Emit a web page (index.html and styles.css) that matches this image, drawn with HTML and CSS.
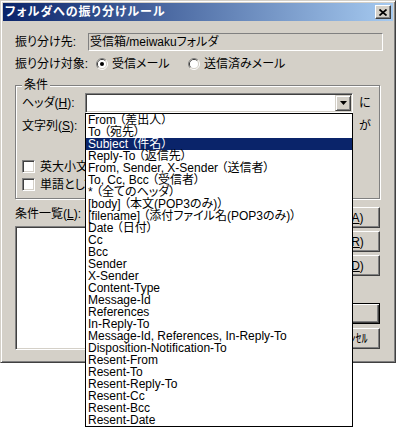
FILE: index.html
```html
<!DOCTYPE html>
<html lang="ja">
<head>
<meta charset="utf-8">
<title>フォルダへの振り分けルール</title>
<link rel="stylesheet" href="styles.css">
</head>
<body>
<div class="page">
<div class="dialog">
  <div class="titlebar">
    <span class="title">フォルダへの振り分けルール</span>
    <span class="close-btn">
      <svg width="8" height="7" viewBox="0 0 8 7"><path d="M0.5 0.5 L7.5 6.5 M7.5 0.5 L0.5 6.5" stroke="#000" stroke-width="1.7" fill="none"/></svg>
    </span>
  </div>
  <div class="content">
    <div class="row-dest">
      <span class="lbl-dest">振り分け先:</span>
      <div class="static">受信箱/meiwakuフォルダ</div>
    </div>
    <div class="row-target">
      <span class="lbl-target">振り分け対象:</span>
      <span class="radio radio-first">
        <svg class="rb" width="12" height="12" viewBox="0 0 12 12">
          <path d="M9.89 2.11 A5.5 5.5 0 0 0 2.11 9.89" stroke="#808080" fill="none"/>
          <path d="M2.11 9.89 A5.5 5.5 0 0 0 9.89 2.11" stroke="#fff" fill="none"/>
          <path d="M9.18 2.82 A4.5 4.5 0 0 0 2.82 9.18" stroke="#404040" fill="none"/>
          <path d="M2.82 9.18 A4.5 4.5 0 0 0 9.18 2.82" stroke="#d4d0c8" fill="none"/>
          <circle cx="6" cy="6" r="4" fill="#fff"/>
          <circle cx="6" cy="6" r="2" fill="#000"/>
        </svg>受信メール
      </span>
      <span class="radio">
        <svg class="rb" width="12" height="12" viewBox="0 0 12 12">
          <path d="M9.89 2.11 A5.5 5.5 0 0 0 2.11 9.89" stroke="#808080" fill="none"/>
          <path d="M2.11 9.89 A5.5 5.5 0 0 0 9.89 2.11" stroke="#fff" fill="none"/>
          <path d="M9.18 2.82 A4.5 4.5 0 0 0 2.82 9.18" stroke="#404040" fill="none"/>
          <path d="M2.82 9.18 A4.5 4.5 0 0 0 9.18 2.82" stroke="#d4d0c8" fill="none"/>
          <circle cx="6" cy="6" r="4" fill="#fff"/>
        </svg>送信済みメール
      </span>
    </div>
    <div class="group">
      <span class="legend">条件</span>
      <div class="grow">
        <span class="glbl">ヘッダ(<u>H</u>):</span>
        <div class="combo">
          <span class="dd-btn">
            <svg width="7" height="4" viewBox="0 0 7 4"><path d="M0 0 H7 L3.5 4 Z" fill="#000"/></svg>
          </span>
        </div>
        <span class="suffix">に</span>
      </div>
      <div class="grow grow-second">
        <span class="glbl">文字列(<u>S</u>):</span>
        <div class="edit"></div>
        <span class="suffix">が</span>
      </div>
      <div class="crow crow-first"><span class="cb"></span>英大小文字を区別する</div>
      <div class="crow crow-second"><span class="cb"></span>単語として検索する</div>
    </div>
    <div class="lower">
      <div class="lower-left">
        <div class="list-lbl">条件一覧(<u>L</u>):</div>
        <div class="listbox"></div>
      </div>
      <div class="lower-right">
        <span class="btn">追加(<u>A</u>)</span>
        <span class="btn btn-gap">置換(<u>R</u>)</span>
        <span class="btn btn-gap">削除(<u>D</u>)</span>
        <span class="btn btn-default">OK</span>
        <span class="btn btn-cancel">ｷｬﾝｾﾙ</span>
      </div>
    </div>
  </div>
  <ul class="dropdown">
    <li>From （差出人）</li>
    <li>To （宛先）</li>
    <li class="sel">Subject （件名）</li>
    <li>Reply-To （返信先）</li>
    <li>From, Sender, X-Sender （送信者）</li>
    <li>To, Cc, Bcc （受信者）</li>
    <li>* （全てのヘッダ）</li>
    <li>[body] （本文(POP3のみ)）</li>
    <li>[filename] （添付ファイル名(POP3のみ)）</li>
    <li>Date （日付）</li>
    <li>Cc</li>
    <li>Bcc</li>
    <li>Sender</li>
    <li>X-Sender</li>
    <li>Content-Type</li>
    <li>Message-Id</li>
    <li>References</li>
    <li>In-Reply-To</li>
    <li>Message-Id, References, In-Reply-To</li>
    <li>Disposition-Notification-To</li>
    <li>Resent-From</li>
    <li>Resent-To</li>
    <li>Resent-Reply-To</li>
    <li>Resent-Cc</li>
    <li>Resent-Bcc</li>
    <li>Resent-Date</li>
  </ul>
</div>
</div>
</body>
</html>
```
FILE: styles.css
```css
* { box-sizing: border-box; }
html, body { margin: 0; padding: 0; background: #fff; }
body {
  font-family: "Liberation Sans", "Noto Sans CJK JP", sans-serif;
  font-size: 12px;
  line-height: 14px;
  color: #000;
  font-feature-settings: "palt";
}
.page { width: 396px; height: 430px; }
u { text-decoration: underline; text-underline-offset: 1px; }

.dialog {
  position: relative;
  width: 396px;
  height: 363px;
  background: #d4d0c8;
  border: 1px solid;
  border-color: #d4d0c8 #404040 #404040 #d4d0c8;
  box-shadow: inset 1px 1px #fff, inset -1px -1px #808080;
  padding: 2px;
}

.titlebar {
  height: 18px;
  display: flex;
  align-items: center;
  justify-content: space-between;
  padding: 0 2px;
  background: linear-gradient(to right, #0a246a, #a6caf0);
}
.title { color: #fff; font-weight: bold; line-height: 14px; letter-spacing: 1px; }
.close-btn {
  width: 16px;
  height: 14px;
  display: flex;
  align-items: center;
  justify-content: center;
  background: #d4d0c8;
  border: 1px solid;
  border-color: #fff #404040 #404040 #fff;
  box-shadow: inset -1px -1px #808080;
}

.content { padding: 12px 10px 0 12px; }

.row-dest { display: flex; align-items: center; height: 18px; }
.lbl-dest { width: 73px; flex: none; }
.static {
  flex: 1;
  height: 18px;
  border: 1px solid;
  border-color: #808080 #fff #fff #808080;
  padding-left: 1px;
  line-height: 16px;
  white-space: nowrap;
}

.row-target { display: flex; align-items: center; height: 14px; margin-top: 6px; }
.lbl-target { width: 81px; flex: none; }
.radio { display: flex; align-items: center; white-space: nowrap; }
.radio-first { width: 92px; }
.rb { flex: none; margin-right: 4px; }

.group {
  position: relative;
  margin-top: 14px;
  margin-right: 3px;
  border: 1px solid #808080;
  box-shadow: inset 1px 1px #fff, 1px 1px #fff;
  padding: 7px 6px 7px 6px;
}
.legend {
  position: absolute;
  top: -7px;
  left: 6px;
  padding: 0 2px;
  background: #d4d0c8;
  line-height: 13px;
}
.grow { display: flex; align-items: center; height: 20px; }
.grow-second { margin-top: 3px; }
.glbl { width: 63px; flex: none; white-space: nowrap; }
.combo, .edit {
  width: 268px;
  height: 20px;
  flex: none;
  background: #fff;
  border: 1px solid;
  border-color: #808080 #fff #fff #808080;
  box-shadow: inset 1px 1px #404040, inset -1px -1px #d4d0c8;
  padding: 1px;
  display: flex;
  justify-content: flex-end;
}
.dd-btn {
  width: 16px;
  height: 16px;
  background: #d4d0c8;
  border: 1px solid;
  border-color: #d4d0c8 #404040 #404040 #d4d0c8;
  box-shadow: inset 1px 1px #fff, inset -1px -1px #808080;
  display: flex;
  align-items: center;
  justify-content: center;
}
.suffix { margin-left: 6px; }

.crow { display: flex; align-items: center; height: 13px; white-space: nowrap; }
.crow-first { margin-top: 24px; }
.crow-second { margin-top: 5px; }
.cb {
  width: 13px;
  height: 13px;
  flex: none;
  margin-right: 5px;
  background: #fff;
  border: 1px solid;
  border-color: #808080 #fff #fff #808080;
  box-shadow: inset 1px 1px #404040, inset -1px -1px #d4d0c8;
}

.lower { display: flex; margin-top: 8px; }
.lower-left { flex: 1; }
.list-lbl { height: 14px; }
.listbox {
  margin-top: 5px;
  height: 124px;
  background: #fff;
  border: 1px solid;
  border-color: #808080 #fff #fff #808080;
  box-shadow: inset 1px 1px #404040, inset -1px -1px #d4d0c8;
}
.lower-right {
  width: 73px;
  margin-left: 7px;
  margin-right: 3px;
  display: flex;
  flex-direction: column;
}
.btn {
  height: 21px;
  display: flex;
  align-items: center;
  justify-content: center;
  background: #d4d0c8;
  border: 1px solid;
  border-color: #fff #404040 #404040 #fff;
  box-shadow: inset -1px -1px #808080;
  white-space: nowrap;
}
.btn-gap { margin-top: 3px; }
.btn-default {
  margin-top: 27px;
  border-color: #000;
  box-shadow: inset 1px 1px #fff, inset -1px -1px #404040, inset -2px -2px #808080;
}
.btn-cancel { margin-top: 4px; padding-left: 18px; }

.dropdown {
  position: absolute;
  left: 84px;
  top: 112px;
  width: 268px;
  margin: 0;
  padding: 0;
  list-style: none;
  background: #fff;
  border: 1px solid #000;
}
.dropdown li {
  height: 12px;
  line-height: 12px;
  padding-left: 2px;
  white-space: nowrap;
}
.dropdown li.sel { background: #0a246a; color: #fff; }
```
